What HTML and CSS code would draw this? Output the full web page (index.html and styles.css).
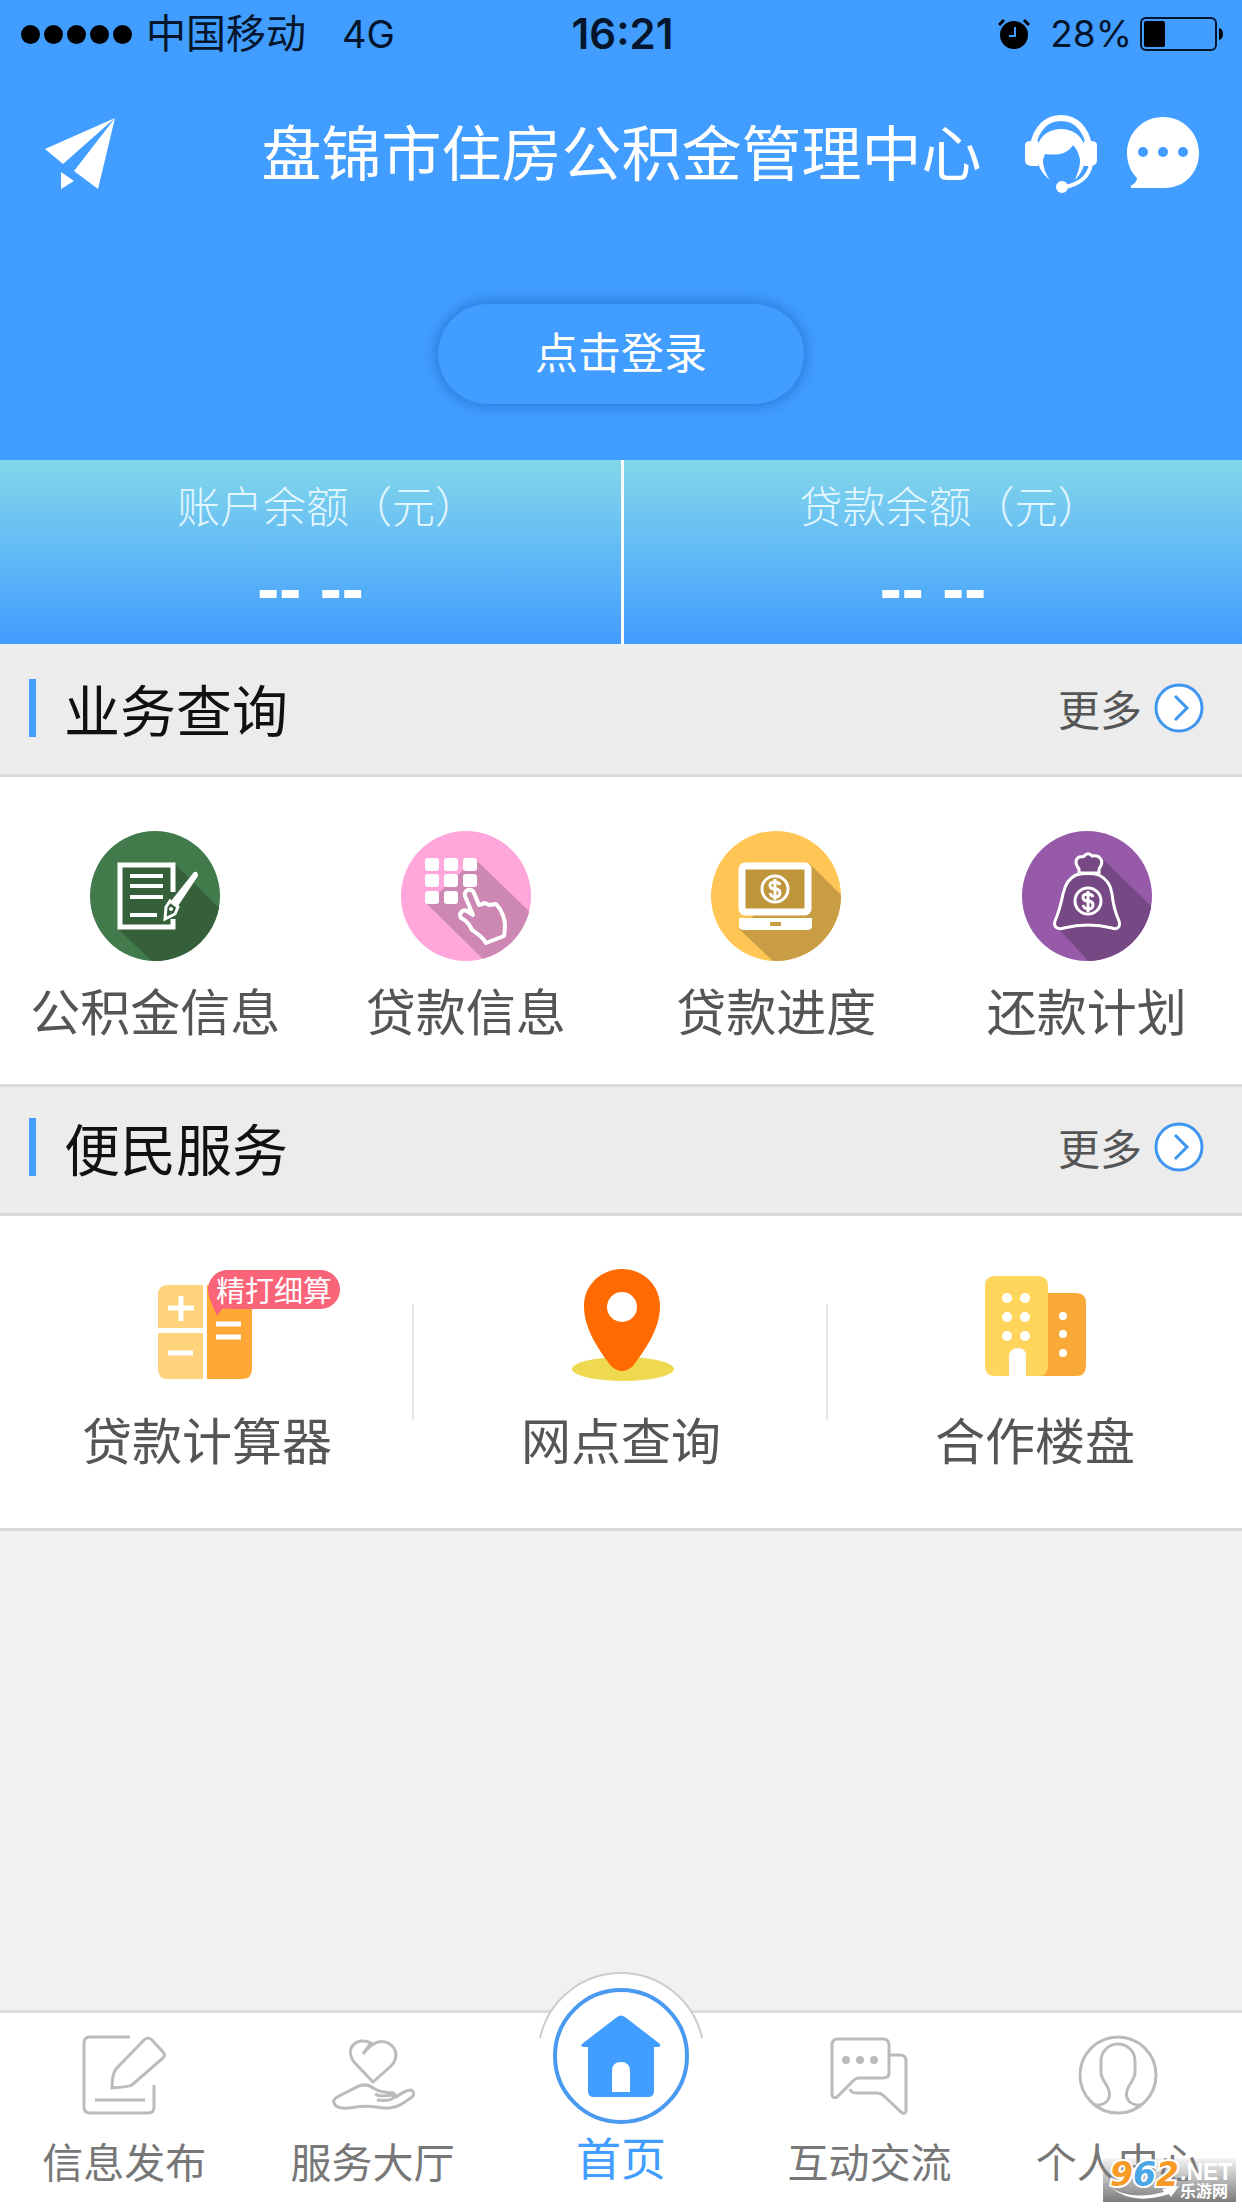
FILE: index.html
```html
<!DOCTYPE html>
<html lang="zh-CN">
<head>
<meta charset="utf-8">
<meta name="viewport" content="width=device-width, initial-scale=1">
<title>盘锦市住房公积金管理中心</title>
<link rel="stylesheet" href="styles.css">
</head>
<body>
<div class="app">
  <header class="hero">
    <div class="status">
      <div class="status-left">
        <span class="signal"><i></i><i></i><i></i><i></i><i></i></span>
        <span class="carrier">中国移动</span>
        <span class="network">4G</span>
      </div>
      <time class="clock">16:21</time>
      <div class="status-right">
        <svg class="alarm" viewBox="0 0 32 32" aria-hidden="true">
          <circle cx="16" cy="17" r="14"/>
          <path d="M1 7 6 2M31 7l-5-5" stroke="#000" stroke-width="3" fill="none"/>
          <path d="M17 9v9h-6" stroke="#419dff" stroke-width="2" fill="none"/>
        </svg>
        <span>28%</span>
        <svg class="battery" viewBox="0 0 84 34" aria-hidden="true">
          <rect x="1" y="1" width="75" height="32" rx="5" fill="none" stroke="#04152c" stroke-width="2"/>
          <rect x="4" y="4" width="21" height="26" rx="2"/>
          <path d="M79 11q4 1 4 6t-4 6z"/>
        </svg>
      </div>
    </div>
    <div class="titlebar">
      <a class="bar-icon" href="#" aria-label="发送">
        <svg viewBox="0 0 72 78"><g fill="#fff"><path d="M71 3 1 34l18 15z"/><path d="M71 3 30 56l24 18z"/><path d="M17 57v17l13-8z"/></g></svg>
      </a>
      <h1>盘锦市住房公积金管理中心</h1>
      <div class="bar-actions">
        <a class="bar-icon" href="#" aria-label="客服">
          <svg viewBox="0 0 72 78">
            <path d="M8 31C11 13 22 3 36 3s25 10 28 28" fill="none" stroke="#fff" stroke-width="6"/>
            <path d="M0 30q0-4 6-4h7v25H6q-6-1-6-5zM72 30q0-4-6-4h-7v25h7q6-1 6-5z" fill="#fff"/>
            <path d="M12 32C15 20 25 14 36 14s21 6 24 18v10c0 8-3 16-10 23 3-8 5-13 5-20-1-7-4-12-7-15-5 8-13 11-28 9l-2 6c0 6 2 13 7 20-8-6-13-15-13-23z" fill="#fff"/>
            <path d="M66 49C64 61 55 69 40 72" fill="none" stroke="#fff" stroke-width="4"/>
            <circle cx="37" cy="72" r="6" fill="#fff"/>
          </svg>
        </a>
        <a class="bar-icon" href="#" aria-label="消息">
          <svg viewBox="0 0 72 78">
            <path d="M36 2c20 0 36 16 36 36S57 73 38 73H5q-3 0 0-3 5-3 5-7C3 56 0 47 0 38 0 18 16 2 36 2z" fill="#fff"/>
            <g fill="#419dff"><circle cx="16" cy="37" r="5"/><circle cx="36" cy="37" r="5"/><circle cx="56" cy="37" r="5"/></g>
          </svg>
        </a>
      </div>
    </div>
    <button class="login" type="button">点击登录</button>
  </header>

  <section class="balances" aria-label="余额">
    <div class="balance"><span class="balance-label">账户余额（元）</span><span class="balance-value">-- --</span></div>
    <div class="balance"><span class="balance-label">贷款余额（元）</span><span class="balance-value">-- --</span></div>
  </section>

  <main>
    <section>
      <div class="section-head">
        <h2>业务查询</h2>
        <a class="more" href="#">更多
          <svg viewBox="0 0 50 50" aria-hidden="true"><circle cx="25" cy="25" r="23" fill="#fff" stroke="#3f96f0" stroke-width="3"/><path d="M21 13l12 12-12 12" fill="none" stroke="#3f96f0" stroke-width="3"/></svg>
        </a>
      </div>
      <nav class="grid grid-four">
        <a href="#">
          <svg class="disc" viewBox="0 0 130 130" aria-hidden="true">
            <defs><clipPath id="disc"><circle cx="65" cy="65" r="65"/></clipPath></defs>
            <circle cx="65" cy="65" r="65" fill="#437a4b"/>
            <path d="M28 32 84 32 130 78 130 130 62 130 28 98z" fill="#35603a" clip-path="url(#disc)"/>
            <g fill="none" stroke="#fff" stroke-width="5"><path d="M83 61V34H30v62h53v-8"/><path d="M40 45h33M40 55h33M40 66h33M40 84h27" stroke-width="4"/></g>
            <path d="M104 41q4-1 4 4L88 75l-7-5z" fill="#fff"/>
            <path d="M80 70l8 6-3 7-10 5 1-12z" fill="#35603a" stroke="#fff" stroke-width="3"/><circle cx="81" cy="78" r="2" fill="#fff"/>
          </svg>
          <span>公积金信息</span>
        </a>
        <a href="#">
          <svg class="disc" viewBox="0 0 130 130" aria-hidden="true">
            <circle cx="65" cy="65" r="65" fill="#ffa6da"/>
            <path d="M74 28 130 82 130 130 84 130 26 73z" fill="#cc88b2" clip-path="url(#disc)"/>
            <g fill="#fff"><rect x="24" y="27" width="14" height="13" rx="3"/><rect x="43" y="27" width="14" height="13" rx="3"/><rect x="62" y="27" width="14" height="13" rx="3"/><rect x="24" y="43" width="14" height="13" rx="3"/><rect x="43" y="43" width="14" height="13" rx="3"/><rect x="62" y="43" width="14" height="13" rx="3"/><rect x="24" y="60" width="14" height="13" rx="3"/><rect x="43" y="60" width="14" height="13" rx="3"/></g>
            <path d="M64 65c-2-6 7-9 9-3l5 12 6-2 4 2 7-1 4 5c5 9 6 15 4 27l-18 7c-3-6-8-9-14-13-3-6-5-9-11-12-3-5 2-9 6-7l6 4z" fill="#cc88b2" stroke="#fff" stroke-width="4" stroke-linejoin="round"/>
          </svg>
          <span>贷款信息</span>
        </a>
        <a href="#">
          <svg class="disc" viewBox="0 0 130 130" aria-hidden="true">
            <circle cx="65" cy="65" r="65" fill="#ffc655"/>
            <path d="M99 33 134 68 130 130 62 130 28 98z" fill="#c99d43" clip-path="url(#disc)"/>
            <rect x="31" y="35" width="66" height="46" rx="3" fill="#c0963c" stroke="#fff" stroke-width="7"/>
            <path d="M28 87h73v8q0 4-5 4H33q-5 0-5-4z" fill="#fff"/><path d="M59 93h11" stroke="#c99d43" stroke-width="4"/>
            <circle cx="64" cy="58" r="13" fill="none" stroke="#fff" stroke-width="3"/>
            <path d="M69 54q-1-3-5-3-5 0-5 3 0 4 5 4t5 4q0 4-5 4-4 0-5-4M64 48v21" fill="none" stroke="#fff" stroke-width="3"/>
          </svg>
          <span>贷款进度</span>
        </a>
        <a href="#">
          <svg class="disc" viewBox="0 0 130 130" aria-hidden="true">
            <circle cx="65" cy="65" r="65" fill="#975aa9"/>
            <path d="M79 26 134 80 130 130 70 134 36 97 50 50z" fill="#764884" clip-path="url(#disc)"/>
            <path d="M57 38q-6-8 0-12 6 0 6-2 4-3 7 1 6-1 8 2 4 4-1 11v4H57zM54 44c8-2 16-2 23 0 8 4 12 10 13 19 1 10 3 18 7 27 2 6-2 9-7 7-16-4-32-4-48 0-6 2-11-1-9-7 4-9 6-17 8-27 2-9 6-16 13-19z" fill="#764884" stroke="#fff" stroke-width="3" stroke-linejoin="round"/>
            <circle cx="66" cy="70" r="13" fill="none" stroke="#fff" stroke-width="3"/>
            <path d="M71 66q-1-3-5-3-5 0-5 3 0 4 5 4t5 4q0 4-5 4-4 0-5-4M66 60v21" fill="none" stroke="#fff" stroke-width="3"/>
          </svg>
          <span>还款计划</span>
        </a>
      </nav>
    </section>

    <section>
      <div class="section-head">
        <h2>便民服务</h2>
        <a class="more" href="#">更多
          <svg viewBox="0 0 50 50" aria-hidden="true"><circle cx="25" cy="25" r="23" fill="#fff" stroke="#3f96f0" stroke-width="3"/><path d="M21 13l12 12-12 12" fill="none" stroke="#3f96f0" stroke-width="3"/></svg>
        </a>
      </div>
      <nav class="grid grid-three">
        <a href="#">
          <span class="service">
            <svg viewBox="0 0 112 112" aria-hidden="true">
              <path d="M52 16v43H7V26q0-10 10-10zM52 64v46H17q-10 0-10-10V64z" fill="#ffd27c"/>
              <path d="M56 16h35q10 0 10 10v74q0 10-10 10H56z" fill="#ffa836"/>
              <path d="M17 39h26M30 27v25M17 84h25M65 55h25M65 68h25" stroke="#fff" stroke-width="5"/>
              <path d="M58 28h22L66 47z" fill="#f96479"/>
            </svg>
            <b class="tag">精打细算</b>
          </span>
          <span>贷款计算器</span>
        </a>
        <a href="#">
          <span class="service">
            <svg viewBox="0 0 112 112" aria-hidden="true">
              <ellipse cx="58" cy="100" rx="51" ry="12" fill="#efd950"/>
              <path d="M57 0c21 0 38 16 38 37 0 24-16 45-27 60q-11 10-22 0C35 82 19 61 19 37 19 16 36 0 57 0z" fill="#ff6b00"/>
              <circle cx="57" cy="38" r="15" fill="#fff"/>
            </svg>
          </span>
          <span>网点查询</span>
        </a>
        <a href="#">
          <span class="service">
            <svg viewBox="0 0 112 112" aria-hidden="true">
              <path d="M58 24h39q10 0 10 10v63q0 10-10 10H58z" fill="#f9a937"/>
              <path d="M16 7h43q10 0 10 10v80q0 10-10 10H47V87q0-8-8-8t-9 8v20H16q-10 0-10-10V17Q6 7 16 7z" fill="#ffd55c"/>
              <g fill="#fff"><circle cx="28" cy="29" r="5"/><circle cx="46" cy="29" r="5"/><circle cx="28" cy="48" r="5"/><circle cx="46" cy="48" r="5"/><circle cx="28" cy="67" r="5"/><circle cx="46" cy="67" r="5"/><circle cx="84" cy="47" r="4"/><circle cx="84" cy="65" r="4"/><circle cx="84" cy="84" r="4"/></g>
            </svg>
          </span>
          <span>合作楼盘</span>
        </a>
      </nav>
    </section>
  </main>

  <nav class="tabs">
    <a href="#">
      <svg viewBox="0 0 84 84" aria-hidden="true"><path d="M48 3H8q-6 0-6 6v64q0 6 6 6h58q6 0 6-6V51M13 66h50M62 6q4-4 8 0l11 12q3 3 0 6L50 51q-4 2-20 3 0-14 4-19z"/></svg>
      <span>信息发布</span>
    </a>
    <a href="#">
      <svg viewBox="0 0 84 84" aria-hidden="true"><path d="M42 48 23 28C13 14 26 2 40 9L32 20Q45 3 57 9c11 6 9 17 3 23zM44 60c6 4 12 1 20 1-1 6-10 6-18 5M64 64q10-8 16-8 5 3 1 7c-7 5-13 10-22 11-9 1-20-4-34-1-6 1-14 3-20-1-5-5-1-8 3-10l20-10q8-3 14 2 8 5 22 5"/></svg>
      <span>服务大厅</span>
    </a>
    <a class="current" href="#" aria-current="page">
      <svg class="home" viewBox="0 0 168 168" aria-hidden="true">
        <path d="M3 67a83 83 0 0 1 162 0V90H3z" fill="#fff"/>
        <path d="M3 67a83 83 0 0 1 162 0" fill="none" stroke="#ccc" stroke-width="2"/>
        <circle cx="84" cy="85" r="66" fill="#fff" stroke="#4a9af2" stroke-width="4"/>
        <path d="M80 46q4-3 8 0l35 27q1 3-2 3h-4v44q0 6-6 6H57q-6 0-6-6V76h-5q-3-1-1-3z" fill="#419dff"/>
        <path d="M75 121V100q0-9 9-9t9 9v21z" fill="#fff"/>
      </svg>
      <span>首页</span>
    </a>
    <a href="#">
      <svg viewBox="0 0 84 84" aria-hidden="true"><path d="M11 5h45q6 0 6 6v28q0 5-6 5H32q-4 0-8 5L10 63q-5 2-5-3V11q0-6 6-6zM62 21h11q6 0 6 6v50q-1 4-5 1L57 62q-3-3-7-3H29q-5 0-6-4"/><g class="dots"><circle cx="19" cy="26" r="4"/><circle cx="33" cy="26" r="4"/><circle cx="47" cy="26" r="4"/></g></svg>
      <span>互动交流</span>
    </a>
    <a href="#">
      <svg viewBox="0 0 84 84" aria-hidden="true"><circle cx="42" cy="41" r="38"/><path d="M18 71c14 1 18-8 14-17-2-5-7-9-7-16V27c0-10 8-17 17-17s17 7 17 17v11c0 7-5 11-7 16-4 9 0 18 14 17"/></svg>
      <span>个人中心</span>
    </a>
  </nav>

  <div class="watermark">
    <span class="mark-number"><i>9</i><i>6</i><i>2</i></span>
    <span class="mark-net">.NET</span>
    <span class="mark-name">乐游网</span>
    <svg viewBox="0 0 72 14" aria-hidden="true"><path d="M1 1q20 14 54 5l-2-3 17-3-8 11-2-3Q24 20 1 1z" fill="#fff"/></svg>
  </div>
</div>
</body>
</html>
```
FILE: styles.css
```css
* { box-sizing: border-box; }

body {
  margin: 0;
  font-family: "Noto Sans CJK SC", sans-serif;
  color: #111;
}

a { color: inherit; text-decoration: none; }
h1, h2 { margin: 0; font-weight: 400; }
svg { display: block; }

.app {
  position: relative;
  display: flex;
  flex-direction: column;
  min-height: 100vh;
  background: #f1f1f1;
}

.hero {
  display: flex;
  flex-direction: column;
  align-items: center;
  height: 460px;
  background: #419dff;
}

.status {
  display: grid;
  grid-template-columns: 1fr auto 1fr;
  align-items: center;
  width: 100%;
  height: 68px;
  padding: 0 18px 0 21px;
  font-family: Inter, "Noto Sans CJK SC", sans-serif;
  font-size: 38px;
  line-height: 48px;
  color: #04152c;
}
.status-left, .status-right { display: flex; align-items: center; }
.status-right { justify-content: flex-end; gap: 8px; }
.signal { display: flex; gap: 4px; margin-right: 14px; }
.signal i { width: 19px; height: 19px; border-radius: 50%; background: #000; }
.carrier { font-size: 40px; }
.network { margin-left: 36px; }
.clock { font-size: 42px; font-weight: 600; }
.status-right span { font-size: 37px; }
.alarm { width: 32px; height: 32px; margin-right: 12px; }
.battery { width: 84px; height: 34px; }

.titlebar {
  display: grid;
  grid-template-columns: 1fr auto 1fr;
  align-items: center;
  width: 100%;
  height: 164px;
  padding: 0 43px 0 44px;
  color: #fff;
}
.titlebar h1 { font-size: 60px; line-height: 88px; }
.bar-icon { padding-top: 8px; }
.bar-icon svg { width: 72px; height: 78px; }
.bar-actions { display: flex; justify-content: flex-end; gap: 30px; }

.login {
  width: 366px;
  height: 100px;
  margin-top: 72px;
  padding: 0 0 8px;
  border: 0;
  border-radius: 50px;
  background: #419dff;
  box-shadow: 0 0 16px #1f6fc8;
  color: #fff;
  font: 400 43px/64px "Noto Sans CJK SC", sans-serif;
}

.balances {
  display: grid;
  grid-template-columns: 1fr 1fr;
  height: 188px;
  border-bottom: 4px solid #e9eeef;
  background: linear-gradient(#83d7ea, #419dff);
  color: #fff;
}
.balance { display: flex; flex-direction: column; align-items: center; gap: 8px; padding-top: 12px; }
.balance + .balance { border-left: 3px solid #fff; }
.balance-label { padding-left: 34px; font-size: 43px; font-weight: 300; line-height: 64px; color: #e2f6ff; }
.balance-value { font: 700 66px/88px "Liberation Sans", sans-serif; }

.section-head {
  display: flex;
  justify-content: space-between;
  align-items: center;
  height: 129px;
  padding: 0 38px 6px 29px;
  border-bottom: 3px solid #d9d9d9;
  background: #ececec;
}
.section-head h2 {
  display: flex;
  align-items: center;
  gap: 28px;
  font-size: 56px;
  line-height: 80px;
}
.section-head h2::before { content: ""; width: 7px; height: 58px; background: #419dff; }
.more { display: flex; align-items: center; gap: 12px; font-size: 42px; line-height: 60px; color: #555; }
.more svg { width: 50px; height: 50px; }

.grid {
  display: grid;
  border-bottom: 3px solid #d9d9d9;
  background: #fff;
  font-size: 50px;
  line-height: 72px;
  color: #555;
}
.grid a { display: flex; flex-direction: column; align-items: center; }
.grid-four { grid-template-columns: repeat(4, 1fr); height: 310px; padding-top: 54px; }
.grid-four a { gap: 12px; }
.disc { width: 130px; height: 130px; }

.grid-three { grid-template-columns: repeat(3, 1fr); height: 315px; }
.grid-three a { gap: 21px; padding-top: 53px; }
.grid-three a:not(:last-child) {
  background: linear-gradient(#e6e6e6, #e6e6e6) right 88px / 2px 116px no-repeat;
}
.service { position: relative; }
.service svg { width: 112px; height: 112px; }
.tag {
  position: absolute;
  left: 57px;
  top: 1px;
  padding: 0 8px;
  border-radius: 20px;
  background: #f96479;
  color: #fff;
  font-size: 29px;
  font-weight: 400;
  line-height: 39px;
  white-space: nowrap;
}

.tabs {
  display: grid;
  grid-template-columns: repeat(5, 1fr);
  grid-template-rows: 195px;
  margin-top: auto;
  border-top: 3px solid #dcdcdc;
  background: #fff;
  font-size: 41px;
  line-height: 60px;
  color: #777;
}
.tabs a { display: flex; flex-direction: column; align-items: center; justify-content: flex-end; gap: 12px; padding-bottom: 18px; }
.tabs svg { flex: none; width: 84px; height: 84px; fill: none; stroke: #bbb; stroke-width: 3; }
.tabs .dots { fill: #bbb; stroke: none; }
.tabs .current { gap: 0; padding-bottom: 21px; color: #419dff; font-size: 45px; }
.tabs .home { width: 168px; height: 168px; margin-bottom: -12px; stroke: none; }

/* Site mark laid over the page's lower right corner */
.watermark {
  position: absolute;
  right: 6px;
  bottom: 6px;
  display: grid;
  grid-template-columns: 77px 56px;
  grid-template-rows: 26px 18px;
  width: 133px;
  height: 44px;
  background: linear-gradient(rgba(150, 150, 150, 0.1), #7c7c7c);
  color: #fff;
  font-family: "Liberation Sans", "Noto Sans CJK SC", sans-serif;
}
.mark-number {
  padding-left: 7px;
  font-family: "DejaVu Sans", sans-serif;
  font-size: 33px;
  font-weight: 700;
  line-height: 34px;
  color: #f79a26;
  -webkit-text-stroke: 4px #fff;
  paint-order: stroke fill;
}
.mark-number i:nth-child(2) { color: #4aa6e4; }
.mark-net { font-size: 23px; font-weight: 700; line-height: 28px; }
.mark-name { grid-column: 2; font-size: 16px; font-weight: 700; line-height: 16px; }
.watermark svg { grid-column: 1; grid-row: 2; width: 72px; height: 14px; margin: 2px 0 0 6px; }
```
